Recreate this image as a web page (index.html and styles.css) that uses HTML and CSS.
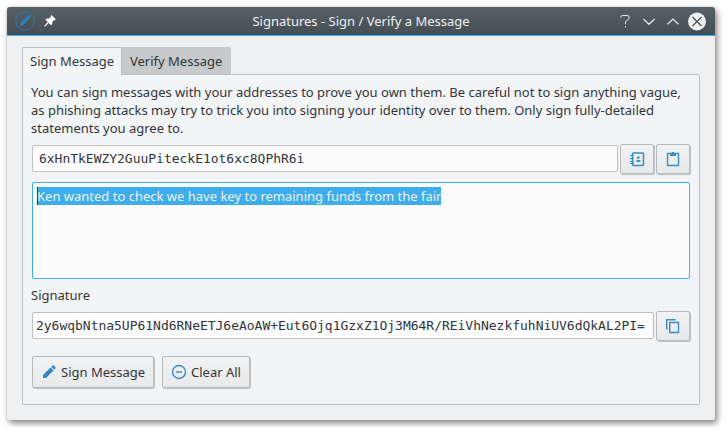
FILE: index.html
```html
<!DOCTYPE html>
<html lang="en">
<head>
<meta charset="utf-8">
<title>Signatures - Sign / Verify a Message</title>
<link rel="stylesheet" href="styles.css">
</head>
<body>
<main class="window">
  <header class="titlebar">
    <div class="title-left">
      <svg width="20" height="20" viewBox="0 0 20 20"><circle cx="10" cy="10" r="9.3" fill="none" stroke="#2f78ab"/><path d="M5 15.2l1-4L13 4.6q1.8-.8 2.2.7L14.5 8l-6 5.8z" fill="#2f82bd"/></svg>
      <svg class="pin" width="12" height="12" viewBox="0 0 12 12"><path d="M7.5 0l4.300 4.300-1 1-1-.1-1.600 1.700.1 2.300-1.200 1.100L4.700 8.100.9 11.700.2 11l3.500-3.900L1.500 4.700l1.100-1.200 2.300.1L6.800 2V.8z" fill="#fcfcfc"/></svg>
    </div>
    <h1 class="title">Signatures - Sign / Verify a Message</h1>
    <div class="title-right">
      <svg width="90" height="20" viewBox="0 0 90 20" fill="none" stroke="#e6e8e9" stroke-width="1.200"><path d="M4 6.600V5.800q0-1.300 1.400-1.300h5.200q1.400 0 1.400 1.400v1.300q0 .8-.7 1.300L8.500 10.600v2.700M8.500 15v1.500" stroke-width="1"/><path d="M26.500 8l5.500 5.300L37.500 8M50.500 13.300l5.500-5.300 5.500 5.300"/><circle cx="80" cy="10.500" r="9" fill="#eff0f1" stroke="none"/><path d="M75.500 6l9 9M84.500 6l-9 9" stroke="#475057"/></svg>
    </div>
  </header>
  <nav class="tabs">
    <div class="tab active">Sign Message</div>
    <div class="tab">Verify Message</div>
  </nav>
  <section class="pane">
    <p class="intro">You can sign messages with your addresses to prove you own them. Be careful not to sign anything vague,<br>as phishing attacks may try to trick you into signing your identity over to them. Only sign fully-detailed<br>statements you agree to.</p>
    <div class="row address-row">
      <div class="field address">6xHnTkEWZY2GuuPiteckE1ot6xc8QPhR6i</div>
      <button class="button icon-button" aria-label="Address book"><svg width="16" height="16" viewBox="0 0 16 16" fill="none" stroke="#3b8dc3"><rect x="3.500" y="2" width="11" height="12.500" rx="1" stroke-width="1.500"/><path d="M1 4.500h4M1 7.500h4M1 10.500h4M1 12.500h4" stroke-width="1.200"/><path d="M8 5.500h2.500v2.200H8zM7.500 9h3.800v2H7.500z" fill="#3b8dc3" stroke="none"/></svg></button>
      <button class="button icon-button" aria-label="Paste"><svg width="16" height="16" viewBox="0 0 16 16" fill="none" stroke="#3b8dc3"><path d="M2.500 2.500h11v12h-11z" stroke-width="1.400"/><path d="M5 2h2V1h2v1h2v3H5z" fill="#3b8dc3" stroke="none"/></svg></button>
    </div>
    <div class="message"><span class="selection">Ken wanted to check we have key to remaining funds from the fair</span></div>
    <div class="label">Signature</div>
    <div class="row signature-row">
      <div class="field signature">2y6wqbNtna5UP61Nd6RNeETJ6eAoAW+Eut6Ojq1GzxZ1Oj3M64R/REiVhNezkfuhNiUV6dQkAL2PI=</div>
      <button class="button icon-button" aria-label="Copy"><svg width="16" height="16" viewBox="0 0 16 16" fill="none" stroke="#3b8dc3" stroke-width="1.400"><path d="M1.700 11.500v-9.800h9M4.700 4.500h8.800v10H4.700z"/></svg></button>
    </div>
    <div class="row actions">
      <button class="button sign"><svg width="16" height="16" viewBox="0 0 16 16"><path d="M2 14v-3l7.500-7.500 3 3L5 14zM10.200 2.800l1.300-1.300q.6-.5 1.200 0l1.700 1.700q.5.600 0 1.200l-1.200 1.400z" fill="#2f86c1"/></svg>Sign Message</button>
      <button class="button clear"><svg width="16" height="16" viewBox="0 0 16 16" fill="none" stroke="#3b8dc3" stroke-width="1.400"><circle cx="8" cy="8" r="6.500"/><path d="M5 8h6"/></svg>Clear All</button>
    </div>
  </section>
</main>
</body>
</html>
```
FILE: styles.css
```css
* { box-sizing: border-box; }
body {
  margin: 0;
  padding: 7px;
  background: #fff;
  color: #31363b;
  font: 13px/18px "Noto Sans", sans-serif;
  overflow: hidden;
}
svg { display: block; flex: none; }
.window {
  width: 708px;
  height: 413px;
  border-radius: 3px 3px 2px 2px;
  background: #eff0f1;
  box-shadow: 0 0 1px #999, 2px 3px 6px rgba(0, 0, 0, .5);
}
.titlebar {
  display: grid;
  grid-template-columns: 110px 1fr 110px;
  align-items: center;
  height: 29px;
  border-bottom: 1px solid #3daee9;
  border-radius: 3px 3px 0 0;
  background: linear-gradient(#566067, #454e54);
}
.title-left { display: flex; align-items: center; padding-left: 8px; }
.pin { margin-left: 9px; }
.title { margin: 0; color: #eff0f1; font-size: 13px; font-weight: 400; text-align: center; }
.title-right { display: flex; justify-content: flex-end; padding-right: 8px; }
.tabs { display: flex; height: 27px; margin: 11px 15px 0; }
.tab {
  width: 109px;
  padding: 5px 0 0 8px;
  border-radius: 0 2px 0 0;
  background: #c8c9ca;
  white-space: nowrap;
}
.tab.active {
  position: relative;
  width: 100px;
  height: 28px;
  padding: 4px 0 0 7px;
  border: 1px solid #bdbfc0;
  border-bottom: 0;
  border-radius: 2px 2px 0 0;
  background: #f3f4f5;
}
.pane {
  width: 678px;
  height: 331px;
  margin-left: 15px;
  padding: 8px 9px 0;
  border: 1px solid #bdbfc0;
  border-radius: 0 2px 2px 2px;
  background: #f3f4f5;
}
.intro { margin: 0 0 7px -1px; white-space: nowrap; }
.row { display: flex; align-items: center; }
.field {
  height: 27px;
  margin-bottom: 1px;
  border: 1px solid #bdbfc0;
  border-radius: 2px;
  background: #fcfcfc;
  font: 13px/25px "DejaVu Sans Mono", monospace;
  letter-spacing: -.02px;
  white-space: nowrap;
}
.address { width: 586px; padding-left: 6px; }
.signature { width: 622px; padding-left: 3px; }
.button {
  display: flex;
  align-items: center;
  height: 32px;
  padding: 0 8px;
  border: 1px solid #b8babc;
  border-radius: 2px;
  background: linear-gradient(#f1f2f3, #e8e9ea);
  box-shadow: 1px 1px 1px rgba(0, 0, 0, .22);
  color: #31363b;
  font: 13px/18px "Noto Sans", sans-serif;
  white-space: nowrap;
}
.icon-button { width: 34px; height: 30px; margin-left: 2px; }
.message {
  height: 97px;
  margin-top: 8px;
  padding: 4px;
  border: 1px solid #3daee9;
  border-radius: 2px;
  background: #fcfcfc;
}
.selection {
  display: inline-block;
  width: 404px;
  height: 18px;
  box-shadow: inset 1px 0 #31363b;
  background: #3daee9;
  color: #eff0f1;
  white-space: nowrap;
}
.label { margin: 7px 0 7px -1px; }
.actions { gap: 8px; margin-top: 15px; }
.sign { width: 122px; gap: 4px; }
.clear { width: 88px; gap: 4px; }
```
